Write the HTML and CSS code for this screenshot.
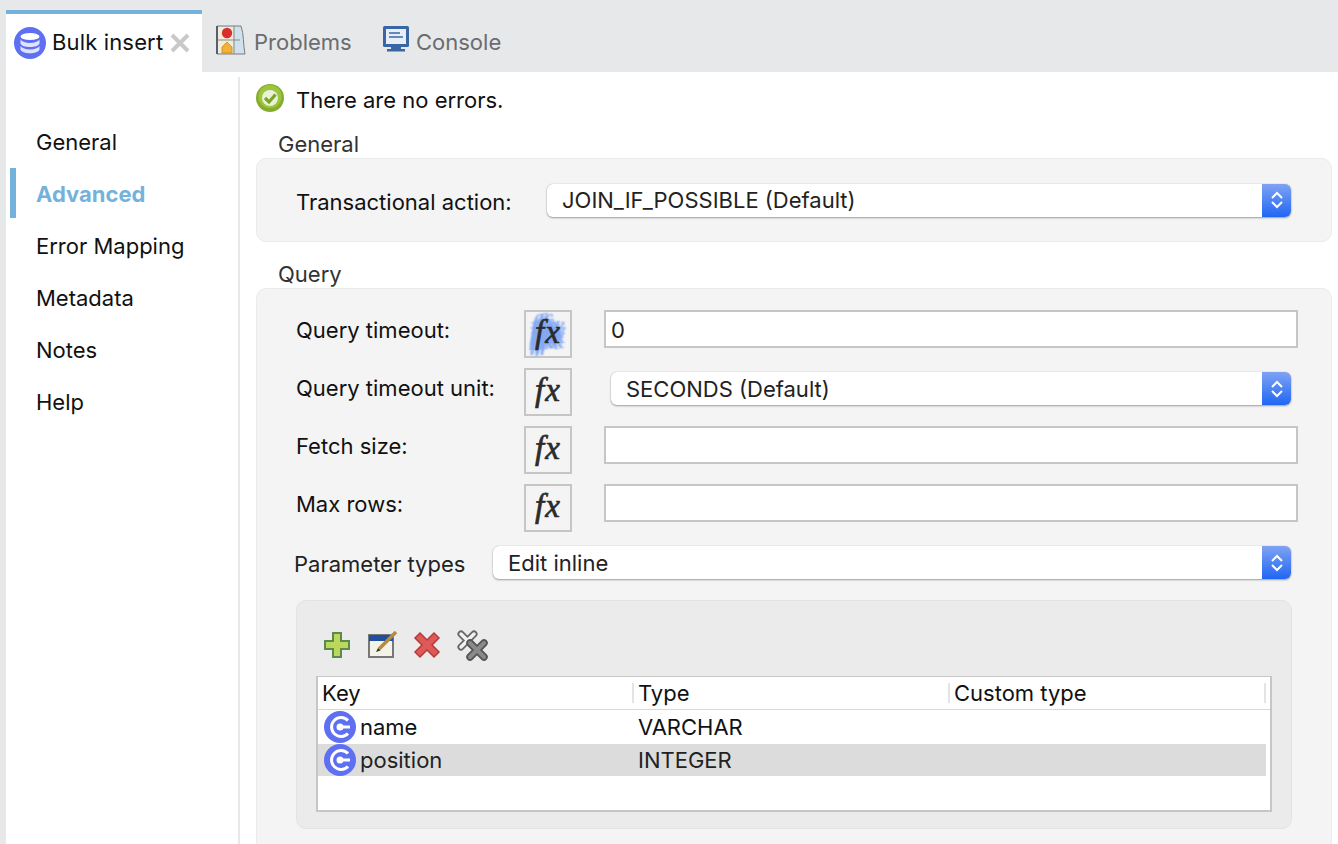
FILE: index.html
```html
<!DOCTYPE html>
<html lang="en">
<head>
<meta charset="utf-8">
<title>Bulk insert</title>
<link rel="stylesheet" href="styles.css">
</head>
<body>
<div class="tabbar">
  <div class="tab active">
    <svg class="ic-db" viewBox="0 0 32 32"><circle cx="16" cy="16" r="16" fill="#5f6ff2"/><ellipse cx="16" cy="9.500" rx="9.500" ry="3.600" fill="#fff"/><path d="M6.500 12.500c1.500 2.400 5 3.400 9.500 3.400s8-1 9.500-3.400v4c-1 2.400-5 3.600-9.500 3.600s-8.500-1.200-9.500-3.600z" fill="#dfe3ff"/><path d="M6.500 19c1.500 2.400 5 3.400 9.500 3.400s8-1 9.500-3.400v3.500c-1 2.600-5 3.800-9.500 3.800s-8.500-1.200-9.500-3.800z" fill="#dfe3ff"/></svg>
    <span class="tab-label">Bulk insert</span>
    <svg class="ic-close" viewBox="0 0 20 20"><path d="M2 2l16 16M18 2L2 18" stroke="#c9c9c9" stroke-width="4"/></svg>
  </div>
  <div class="tab">
    <svg class="ic-problems" viewBox="0 0 30 30"><path d="M1 1h24c3 8 2 18 4 28H1z" fill="#cfe0ef" stroke="#7d7d78"/><path d="M2 2h15v26H2z" fill="#f1ecdc"/><path d="M1 15h23M18 1v28" stroke="#8b8b85"/><path d="M1 1v28" stroke="#55606b" stroke-width="2"/><circle cx="11" cy="8" r="5.200" fill="#d92e2b"/><path d="M6 28v-6l5-5 5 5v6z" fill="#f2b234" stroke="#c98a1e" stroke-width=".8"/></svg>
    <span class="tab-label">Problems</span>
  </div>
  <div class="tab">
    <svg class="ic-console" viewBox="0 0 28 28"><rect x="1" y="1" width="26" height="21" rx="1.500" fill="#3a66a6"/><rect x="4" y="4" width="20" height="15" fill="#e8eef6"/><path d="M7 8h11M7 12h14" stroke="#3a66a6" stroke-width="1.600"/><path d="M9 22h10v2h4v2.500H5V24h4z" fill="#3a66a6"/></svg>
    <span class="tab-label">Console</span>
  </div>
</div>
<div class="page">
  <nav class="side">
    <a class="nav-item">General</a>
    <a class="nav-item selected">Advanced</a>
    <a class="nav-item">Error Mapping</a>
    <a class="nav-item">Metadata</a>
    <a class="nav-item">Notes</a>
    <a class="nav-item">Help</a>
  </nav>
  <main class="main">
    <div class="status">
      <svg class="ic-ok" viewBox="0 0 28 28"><circle cx="14" cy="14" r="14" fill="#86ad2e"/><circle cx="14" cy="12.500" r="11.500" fill="#9cc43f"/><circle cx="14" cy="14" r="8" fill="#e9f2d6"/><path d="M9 14l4 4 6.500-7.500" fill="none" stroke="#79a626" stroke-width="3.200"/></svg>
      <span class="status-text">There are no errors.</span>
    </div>
    <h2 class="legend first">General</h2>
    <section class="panel general">
      <label class="lbl">Transactional action:</label>
      <div class="select sel-trans"><span>JOIN_IF_POSSIBLE (Default)</span><span class="stepper"><svg viewBox="0 0 14 22"><path d="M2 9l5-5 5 5M2 13l5 5 5-5" fill="none" stroke="#fff" stroke-width="2"/></svg></span></div>
    </section>
    <h2 class="legend">Query</h2>
    <section class="panel query">
      <div class="row">
        <label class="lbl w228">Query timeout:</label>
        <span class="fx hl">fx</span>
        <div class="input">0</div>
      </div>
      <div class="row">
        <label class="lbl w228">Query timeout unit:</label>
        <span class="fx">fx</span>
        <div class="select sel-unit"><span>SECONDS (Default)</span><span class="stepper"><svg viewBox="0 0 14 22"><path d="M2 9l5-5 5 5M2 13l5 5 5-5" fill="none" stroke="#fff" stroke-width="2"/></svg></span></div>
      </div>
      <div class="row">
        <label class="lbl w228">Fetch size:</label>
        <span class="fx">fx</span>
        <div class="input"></div>
      </div>
      <div class="row">
        <label class="lbl w228">Max rows:</label>
        <span class="fx">fx</span>
        <div class="input"></div>
      </div>
      <div class="row param">
        <label class="lbl">Parameter types</label>
        <div class="select sel-param"><span>Edit inline</span><span class="stepper"><svg viewBox="0 0 14 22"><path d="M2 9l5-5 5 5M2 13l5 5 5-5" fill="none" stroke="#fff" stroke-width="2"/></svg></span></div>
      </div>
      <div class="inner">
        <div class="toolbar">
          <svg class="tool" viewBox="0 0 28 28"><path d="M10 2h8v8h8v8h-8v8h-8v-8H2v-8h8z" fill="#bcd85a" stroke="#5b8a4e" stroke-width="2"/></svg>
          <svg class="tool edit" viewBox="0 0 32 28"><rect x="2" y="4" width="24" height="22" fill="#f5f3e8" stroke="#777" stroke-width="2"/><rect x="2" y="4" width="24" height="6" fill="#1f4f9e"/><path d="M12 18L29 1" stroke="#b98a3a" stroke-width="3.500"/><path d="M9 21l2-4 2.500 2.500z" fill="#333"/></svg>
          <svg class="tool" viewBox="0 0 28 28"><path d="M7 2l7 7 7-7 5 5-7 7 7 7-5 5-7-7-7 7-5-5 7-7-7-7z" fill="#dd5a58" stroke="#b63a3a" stroke-width="1.500"/></svg>
          <svg class="tool wide" viewBox="0 0 32 32"><path d="M5 5l13 13M18 5L5 18" stroke="#666" stroke-width="7" stroke-linecap="round"/><path d="M5 5l13 13M18 5L5 18" stroke="#f1f1f1" stroke-width="3.500" stroke-linecap="round"/><path d="M14 14l14 14M28 14L14 28" stroke="#555" stroke-width="7.500" stroke-linecap="round"/><path d="M14 14l14 14M28 14L14 28" stroke="#8a8a8a" stroke-width="4" stroke-linecap="round"/></svg>
        </div>
        <div class="table">
          <div class="thead">
            <div class="th col-key">Key</div>
            <div class="th col-type">Type</div>
            <div class="th col-custom">Custom type</div>
            <div class="th-end"></div>
          </div>
          <div class="tr">
            <div class="td col-key"><svg class="ic-c" viewBox="0 0 32 32"><circle cx="16" cy="16" r="16" fill="#5f6ff2"/><path d="M24 9.500A9.500 9.500 0 1 0 24 22.500" fill="none" stroke="#fff" stroke-width="3"/><circle cx="16" cy="16" r="3.500" fill="#fff"/><path d="M16 16h10" stroke="#fff" stroke-width="3"/></svg>name</div>
            <div class="td col-type">VARCHAR</div>
          </div>
          <div class="tr sel">
            <div class="td col-key"><svg class="ic-c" viewBox="0 0 32 32"><circle cx="16" cy="16" r="16" fill="#5f6ff2"/><path d="M24 9.500A9.500 9.500 0 1 0 24 22.500" fill="none" stroke="#fff" stroke-width="3"/><circle cx="16" cy="16" r="3.500" fill="#fff"/><path d="M16 16h10" stroke="#fff" stroke-width="3"/></svg>position</div>
            <div class="td col-type">INTEGER</div>
          </div>
        </div>
      </div>
    </section>
  </main>
</div>
</body>
</html>
```

FILE: styles.css
```css
* { box-sizing: border-box; }
html, body { height: 844px; overflow: hidden; }
body {
  margin: 0;
  background: #e7e8ea;
  color: #111;
  font-family: Inter, "Liberation Sans", sans-serif;
  font-size: 22px;
}
.tabbar {
  height: 72px;
  display: flex;
  align-items: flex-end;
  padding-left: 6px;
}
.tab {
  height: 62px;
  display: flex;
  align-items: center;
  color: #6a6c70;
  padding: 2px 0 0 14px;
  width: 180px;
}
.tab + .tab + .tab { width: auto; padding-left: 0; }
.tab.active {
  width: 196px;
  padding-left: 8px;
  background: #fff;
  color: #111;
  border-top: 4px solid #74b2dc;
  padding-top: 0;
}
.tab.active .tab-label { position: relative; top: -1px; letter-spacing: .15px; }
.ic-db { width: 32px; height: 32px; margin-right: 6px; }
.ic-close { width: 20px; height: 20px; margin-left: 7px; }
.ic-problems { width: 30px; height: 30px; margin-right: 8px; margin-top: -4px; }
.ic-console { width: 28px; height: 28px; margin-right: 6px; margin-top: -6px; }
.page {
  display: flex;
  height: 772px;
  margin-left: 6px;
  background: #fff;
}
.side {
  width: 234px;
  flex: none;
  border-right: 2px solid #e8e8e8;
  margin-top: 5px;
  padding: 39px 0 0 4px;
}
.nav-item {
  display: flex;
  align-items: center;
  height: 50px;
  margin-bottom: 2px;
  padding: 2px 0 0 20px;
  border-left: 6px solid transparent;
}
.nav-item.selected {
  border-left-color: #74b2dc;
  color: #74b2dc;
  font-weight: 700;
}
.main {
  flex: 1;
  padding: 11px 6px 0 16px;
}
.status {
  display: flex;
  align-items: center;
  height: 30px;
  gap: 12px;
}
.status-text { padding-top: 3px; }
.ic-ok { width: 28px; height: 28px; }
.legend {
  margin: 0 0 0 22px;
  font-size: 22px;
  font-weight: 400;
  line-height: 32px;
  color: #333;
}
.legend.first { margin-top: 15px; height: 30px; }
.panel {
  background: #f4f4f4;
  border: 1px solid #ebebeb;
  border-radius: 10px;
}
.general {
  height: 84px;
  display: flex;
  align-items: center;
  padding-left: 39px;
  margin-bottom: 16px;
}
.legend + .query { margin-top: -2px; }
.lbl { color: #111; white-space: nowrap; }
.general .lbl { width: 251px; padding-top: 3px; }
.w228 { width: 228px; flex: none; }
.select {
  height: 33px;
  display: flex;
  align-items: center;
  justify-content: space-between;
  background: #fff;
  border-radius: 6px;
  padding-left: 15px;
  box-shadow: 0 1px 2px #9d9d9d, 0 0 1px #aaa;
  color: #222;
}
.stepper {
  width: 29px;
  height: 33px;
  border-radius: 0 6px 6px 0;
  background: linear-gradient(#7fa3f3, #2066f4);
  display: flex;
  align-items: center;
  justify-content: center;
}
.stepper svg { width: 14px; height: 22px; }
.sel-trans { width: 744px; }
.query {
  padding: 21px 0 0 39px;
  height: 556px;
  border-bottom: 0;
  border-radius: 10px 10px 0 0;
}
.row {
  display: flex;
  height: 48px;
  margin-bottom: 10px;
  align-items: flex-start;
}
.row .lbl { line-height: 40px; }
.fx {
  width: 48px;
  height: 48px;
  flex: none;
  border: 2px solid #c6c6c6;
  background: #f4f4f4;
  font: italic 400 33px/41px "Liberation Serif", serif;
  letter-spacing: 1px;
  -webkit-text-stroke: .7px #2b2b2b;
  color: #2b2b2b;
  text-align: center;
}
.fx.hl {
  text-shadow:
    6px 0 2px #84a9f2, -6px 0 2px #84a9f2, 0 6px 2px #84a9f2, 0 -6px 2px #84a9f2,
    5px 5px 2px #84a9f2, -5px 5px 2px #84a9f2, 5px -5px 2px #84a9f2, -5px -5px 2px #84a9f2,
    3px 0 2px #84a9f2, -3px 0 2px #84a9f2, 0 3px 2px #84a9f2, 0 -3px 2px #84a9f2;
}
.input {
  width: 694px;
  height: 38px;
  margin-left: 32px;
  background: #fff;
  border: 2px solid #c6c6c6;
  padding-left: 5px;
  line-height: 36px;
  color: #222;
}
.sel-unit { width: 680px; margin: 4px 0 0 39px; }
.row.param {
  height: 33px;
  margin: 14px 0 21px -2px;
  align-items: center;
}
.row.param .lbl { width: 199px; line-height: 36px; padding-top: 2px; color: #222; }
.sel-param { width: 798px; }
.inner {
  width: 996px;
  height: 229px;
  background: #ebebeb;
  border: 1px solid #e3e3e3;
  border-radius: 10px;
  padding: 28px 19px 0 19px;
}
.toolbar {
  display: flex;
  align-items: center;
  height: 32px;
  gap: 14px;
  margin: 0 0 15px 7px;
}
.tool { width: 28px; height: 28px; }
.tool.edit { width: 32px; margin-left: 2px; }
.tool.wide { width: 32px; height: 32px; margin-left: 1px; }
.table {
  width: 956px;
  height: 136px;
  background: #fff;
  border: 2px solid #c6c6c6;
  border-top-width: 1px;
  padding-right: 4px;
}
.thead {
  display: flex;
  height: 33px;
  border-bottom: 1px solid #d8d8d8;
  margin-right: -4px;
  align-items: center;
}
.th {
  height: 20px;
  line-height: 20px;
  padding-left: 4px;
  border-left: 2px solid #e4e4e4;
}
.th.col-key { border-left: 0; }
.col-key { width: 314px; flex: none; }
.col-type { width: 316px; flex: none; }
.col-custom { width: 316px; flex: none; }
.th-end { width: 2px; height: 20px; background: #e4e4e4; }
.tr {
  display: flex;
  align-items: center;
  height: 34px;
}
.tr.sel { height: 32px; background: #dcdcdc; color: #222; }
.td { display: flex; align-items: center; }
.td.col-type { padding-left: 6px; }
.td.col-key { padding-left: 6px; gap: 4px; }
.ic-c { width: 32px; height: 32px; }
```
